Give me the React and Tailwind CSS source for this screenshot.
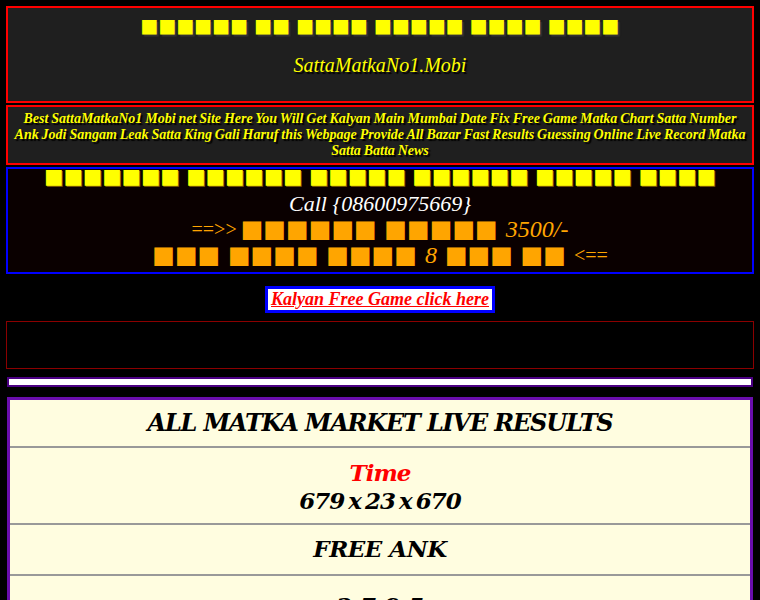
const Boxes = ({ text, className = '' }) => (
  <span className={`font-['DejaVu_Sans',sans-serif] not-italic ${className}`}>{text}</span>
);

export default function App() {
  return (
    <div className="min-h-screen bg-black px-[6px] pt-[6px] pb-4 font-['Liberation_Serif','Times_New_Roman',serif]">
      {/* Top title */}
      <div className="border-2 border-[#ff0000] bg-[#1f1f1f] h-[97px] flex flex-col items-center text-center">
        <div className="mt-[6px] text-[19px] leading-[22px] text-[#ffff00] [text-shadow:2px_2px_1px_#333]">
          <Boxes text="■■■■■■ ■■ ■■■■ ■■■■■ ■■■■ ■■■■" />
        </div>
        <div className="mt-[16px] italic text-[20px] leading-[24px] text-[#ffff00] [text-shadow:2px_2px_1px_#000]">
          SattaMatkaNo1.Mobi
        </div>
      </div>

      {/* Description */}
      <div className="mt-[2px] border-2 border-[#ff0000] bg-[#1f1f1f] px-[1px] py-[4px] text-center">
        <p className="italic font-bold text-[14px] leading-[16px] [word-spacing:-0.6px] text-[#ffff00] [text-shadow:2px_2px_1px_#000]">
          Best SattaMatkaNo1 Mobi net Site Here You Will Get Kalyan Main Mumbai Date Fix Free Game Matka Chart Satta Number
          <br />
          Ank Jodi Sangam Leak Satta King Gali Haruf this Webpage Provide All Bazar Fast Results Guessing Online Live Record Matka Satta Batta News
        </p>
      </div>

      {/* Call box */}
      <div className="mt-[2px] border-2 border-[#0000ff] bg-[#0a0000] h-[107px] flex flex-col items-center text-center">
        <div className="-mt-[3px] text-[20.5px] leading-[20px] text-[#ffff00] [text-shadow:1px_1px_0_#886600]">
          <Boxes text="■■■■■■■ ■■■■■■ ■■■■■ ■■■■■■ ■■■■■ ■■■■" />
        </div>
        <div className="mt-[6px] italic text-[22px] leading-[24px] text-white">
          Call {'{'}08600975669{'}'}
        </div>
        <div className="text-[#ffa500] text-[24px] leading-[26px] flex items-end">
          <span className="text-[20px] mr-1">==&gt;&gt;</span>
          <Boxes text="■■■■■■ ■■■■■" className="text-[24px]" />
          <span className="italic ml-2">3500/-</span>
        </div>
        <div className="text-[#ffa500] text-[24px] leading-[26px] flex items-end">
          <Boxes text="■■■ ■■■■ ■■■■" className="text-[24px]" />
          <span className="italic mx-2">8</span>
          <Boxes text="■■■ ■■" className="text-[24px]" />
          <span className="text-[20px] ml-2">&lt;==</span>
        </div>
      </div>

      {/* Link button */}
      <div className="flex justify-center mt-[12px]">
        <a
          href="#"
          className="border-[3px] border-[#0000ff] bg-white px-[3px] h-[27px] flex items-center italic font-bold text-[18px] text-[#ff0000] underline"
        >
          Kalyan Free Game click here
        </a>
      </div>

      {/* Empty box */}
      <div className="mt-[8px] border border-[#8b0000] h-[48px]" />

      {/* White bar */}
      <div className="mt-[8px] mx-[1px] border-2 border-[#4b0082] bg-white h-[10px]" />

      {/* Results table */}
      <div className="mt-[10px] mx-[1px] border-[3px] border-[#6a0dad] bg-[#fffde0] text-black italic font-bold font-['DejaVu_Serif',serif]">
        <div className="h-[48px] flex items-center justify-center border-b-2 border-[#999] text-[24px] tracking-[-1.2px]">
          ALL MATKA MARKET LIVE RESULTS
        </div>
        <div className="h-[77px] pt-[2px] flex flex-col items-center justify-center border-b-2 border-[#999] text-[23px] leading-[28px] tracking-[-1px]">
          <span className="text-[#ff0000]">Time</span>
          <span className="[word-spacing:-3px]">679 x 23 x 670</span>
        </div>
        <div className="h-[51px] flex items-center justify-center border-b-2 border-[#999] text-[23px] tracking-[-0.5px]">
          FREE ANK
        </div>
        <div className="h-[60px] flex items-center justify-center text-[23px]">
          2 7 9 5
        </div>
      </div>
    </div>
  );
}
